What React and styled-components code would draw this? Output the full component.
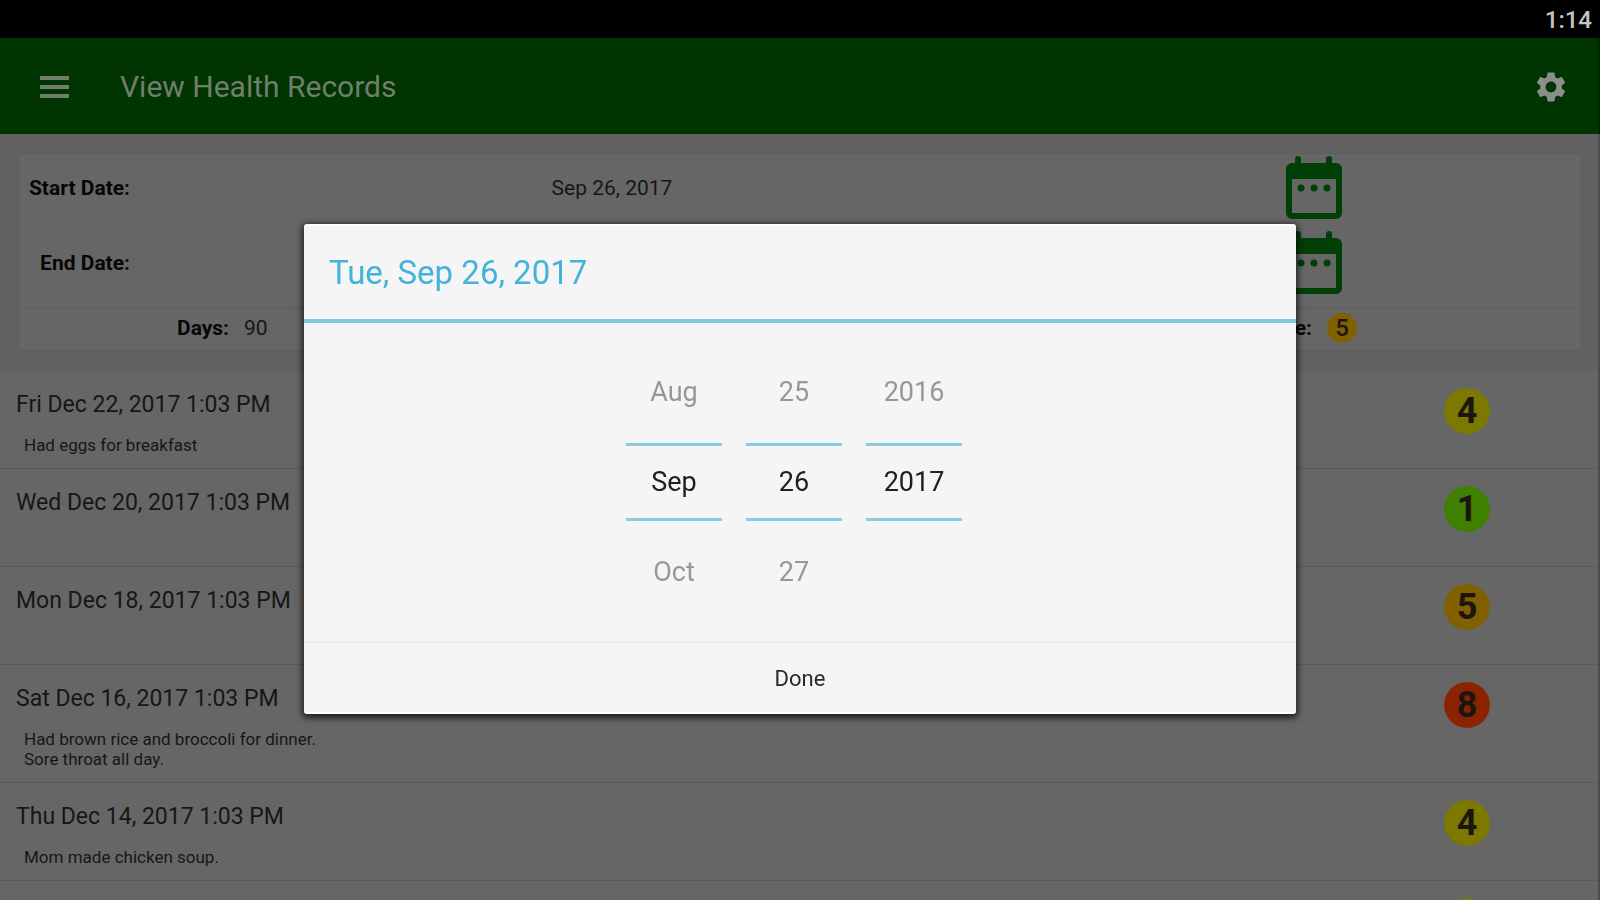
import React, { useState } from 'react';
import styled, { createGlobalStyle } from 'styled-components';
import { MdSettings } from 'react-icons/md';

const GlobalStyle = createGlobalStyle`
    * {
        box-sizing: border-box;
    }

    body {
        margin: 0;
        background: #616161;
        color: #161616;
        font-family: Roboto, "Noto Sans", sans-serif;
        overflow: hidden;
    }

    h1, h2, p, ul, dl, dd {
        margin: 0;
        padding: 0;
    }

    button {
        margin: 0;
        padding: 0;
        border: 0;
        background: none;
        color: inherit;
        font-family: inherit;
        cursor: pointer;
    }
`

const Screen = styled.div`
    display: flex;
    flex-direction: column;
    height: 100vh;
    overflow: hidden;
`

const StatusBar = styled.div`
    display: flex;
    flex: none;
    align-items: center;
    justify-content: flex-end;
    height: 38px;
    padding: 2px 8px 0 0;
    background: #000;
    color: #c4c4c4;
    font-size: 24px;
    font-weight: 500;
`

const AppBar = styled.header`
    display: flex;
    flex: none;
    align-items: center;
    height: 96px;
    padding: 2px 29px 0 40px;
    background: #003400;
    border-right: 2px solid #002600;
    color: #6f7f6a;
`

const AppTitle = styled.h1`
    flex: 1;
    padding-left: 51px;
    font-size: 30px;
    font-weight: 400;
    line-height: 40px;
`

const IconButton = styled.button`
    display: flex;
    color: ${props => props.$color || 'inherit'};
`

const Body = styled.main`
    flex: 1;
    min-height: 0;
    border-right: 2px solid #4c4c4c;
`

const Card = styled.section`
    margin: 19px 16px 20px 18px;
    padding: 0 5px;
    background: #666;
    border: 1px solid #5d5d5d;
`

const DateRows = styled.div`
    display: flex;
    flex-direction: column;
    gap: 8px;
    padding-bottom: 11px;
`

const DateRow = styled.div`
    display: grid;
    grid-template-columns: 106px 2fr 1fr;
    align-items: center;
    height: 67px;
    font-size: 21px;
    line-height: 28px;
`

const DateLabel = styled.span`
    color: #070707;
    font-weight: 700;
    text-align: right;
`

const DateValue = styled.span`
    text-align: center;
`

const CalendarButton = styled(IconButton)`
    justify-self: center;
    margin-right: 42px;
    color: #003f06;
`

const Totals = styled.dl`
    display: flex;
    justify-content: space-between;
    height: 43px;
    padding: 0 219px 3px 153px;
    border-top: 1px solid #5d5d5d;
    font-size: 21px;
`

const Total = styled.div`
    display: flex;
    align-items: center;
    gap: 15px;

    dt {
        color: #070707;
        font-weight: 700;
    }
`

const ScoreBadge = styled.span`
    display: flex;
    flex: none;
    align-items: center;
    justify-content: center;
    width: ${props => props.$small ? 30 : 46}px;
    height: ${props => props.$small ? 30 : 46}px;
    border-radius: 50%;
    background: ${props => props.$color};
    color: #1c1510;
    font-size: ${props => props.$small ? 24 : 36}px;
    font-weight: ${props => props.$small ? 500 : 700};
    line-height: 1;
`

const RecordList = styled.ul`
    list-style: none;
`

const RecordItem = styled.li`
    display: flex;
    justify-content: space-between;
    min-height: 98px;
    padding: 17px 108px 13px 16px;
    background: #666;
    border-bottom: 1px solid #5a5a5a;
`

const RecordDate = styled.h2`
    font-size: 23px;
    font-weight: 400;
    line-height: 34px;
`

const RecordNote = styled.p`
    padding: 13px 0 0 8px;
    font-size: 17px;
    line-height: 20px;
    white-space: pre-line;
`

const Overlay = styled.div`
    position: fixed;
    inset: 0;
    display: flex;
    align-items: center;
    justify-content: center;
    padding-top: 38px;
`

const Dialog = styled.section`
    display: flex;
    flex-direction: column;
    width: 62%;
    background: #f5f5f5;
    border: solid #fff;
    border-width: 2px 0;
    border-radius: 3px;
    box-shadow: 0 2px 6px 2px rgba(0, 0, 0, .7);
`

const DialogTitle = styled.h2`
    padding: 26px 25px 25px;
    border-bottom: 4px solid #80c9df;
    color: #45b3d9;
    font-size: 33px;
    font-weight: 400;
    line-height: 42px;
`

const Pickers = styled.div`
    display: flex;
    justify-content: center;
    gap: 24px;
    padding: 18px 12px 18px 0;
`

const PickerColumn = styled.div`
    display: flex;
    flex-direction: column;
    width: 96px;
`

const PickerOption = styled.button`
    height: ${props => props.$selected ? 78 : 102}px;
    border: solid #86cde1;
    border-width: ${props => props.$selected ? '3px 0' : '0'};
    color: ${props => props.$selected ? '#202020' : '#979797'};
    font-size: 27px;
`

const DoneButton = styled.button`
    height: 71px;
    padding-top: 2px;
    border-top: 2px solid #ebebeb;
    color: #2a2a2a;
    font-size: 22px;
`

const records = [
    { date: 'Fri Dec 22, 2017 1:03 PM', note: 'Had eggs for breakfast', score: 4 },
    { date: 'Wed Dec 20, 2017 1:03 PM', score: 1 },
    { date: 'Mon Dec 18, 2017 1:03 PM', score: 5 },
    { date: 'Sat Dec 16, 2017 1:03 PM', note: 'Had brown rice and broccoli for dinner.\nSore throat all day.', score: 8 },
    { date: 'Thu Dec 14, 2017 1:03 PM', note: 'Mom made chicken soup.', score: 4 },
    { date: '', score: 4 }
]

const scoreColors = {
    1: '#3f8000',
    4: '#7c7800',
    5: '#806000',
    8: '#8a2400'
}

const pickers = [
    { name: 'Month', options: ['Aug', 'Sep', 'Oct'] },
    { name: 'Day', options: ['25', '26', '27'] },
    { name: 'Year', options: ['2016', '2017', ''] }
]

const MenuIcon = () => (
    <svg width="29" height="22" viewBox="0 0 29 22" fill="currentColor" aria-hidden="true">
        <rect width="29" height="4" />
        <rect y="9" width="29" height="4" />
        <rect y="18" width="29" height="4" />
    </svg>
)

const CalendarIcon = () => (
    <svg width="58" height="64" viewBox="0 0 58 64" aria-hidden="true">
        <path fill="currentColor" fillRule="evenodd" d="M10 7V3a3 3 0 0 1 6 0v4h25V3a3 3 0 0 1 6 0v4h4a6 6 0 0 1 6 6v44a6 6 0 0 1-6 6H7a6 6 0 0 1-6-6V13a6 6 0 0 1 6-6zM7 23v34h44V23z" />
        <circle cx="16" cy="32" r="3.5" fill="currentColor" />
        <circle cx="29" cy="32" r="3.5" fill="currentColor" />
        <circle cx="42" cy="32" r="3.5" fill="currentColor" />
    </svg>
)

const DatePickerDialog = ({ onDone }) => (
    <Overlay>
        <Dialog role="dialog" aria-modal="true" aria-labelledby="picker-title">
            <DialogTitle id="picker-title">Tue, Sep 26, 2017</DialogTitle>
            <Pickers>
                {pickers.map(({ name, options }) => (
                    <PickerColumn key={name} role="group" aria-label={name}>
                        {options.map((option, i) => option && (
                            <PickerOption key={option} type="button" $selected={i === 1}>{option}</PickerOption>
                        ))}
                    </PickerColumn>
                ))}
            </Pickers>
            <DoneButton type="button" onClick={onDone}>Done</DoneButton>
        </Dialog>
    </Overlay>
)

const App = () => {

    const [open, setOpen] = useState(true);

    return (
        <Screen>
            <GlobalStyle />
            <StatusBar>1:14</StatusBar>
            <AppBar>
                <IconButton type="button" aria-label="Menu"><MenuIcon /></IconButton>
                <AppTitle>View Health Records</AppTitle>
                <IconButton type="button" aria-label="Settings" $color="#8b8f8b"><MdSettings size={36} /></IconButton>
            </AppBar>
            <Body>
                <Card>
                    <DateRows>
                        <DateRow>
                            <DateLabel>Start Date:</DateLabel>
                            <DateValue>Sep 26, 2017</DateValue>
                            <CalendarButton type="button" aria-label="Pick start date" onClick={() => setOpen(true)}><CalendarIcon /></CalendarButton>
                        </DateRow>
                        <DateRow>
                            <DateLabel>End Date:</DateLabel>
                            <DateValue />
                            <CalendarButton type="button" aria-label="Pick end date" onClick={() => setOpen(true)}><CalendarIcon /></CalendarButton>
                        </DateRow>
                    </DateRows>
                    <Totals>
                        <Total><dt>Days:</dt><dd>90</dd></Total>
                        <Total>
                            <dt>Average:</dt>
                            <dd><ScoreBadge $small $color={scoreColors[5]}>5</ScoreBadge></dd>
                        </Total>
                    </Totals>
                </Card>
                <RecordList>
                    {records.map(({ date, note, score }, i) => (
                        <RecordItem key={i}>
                            <div>
                                <RecordDate>{date}</RecordDate>
                                {note && <RecordNote>{note}</RecordNote>}
                            </div>
                            <ScoreBadge $color={scoreColors[score]}>{score}</ScoreBadge>
                        </RecordItem>
                    ))}
                </RecordList>
            </Body>
            {open && <DatePickerDialog onDone={() => setOpen(false)} />}
        </Screen>
    )
}

export default App;
